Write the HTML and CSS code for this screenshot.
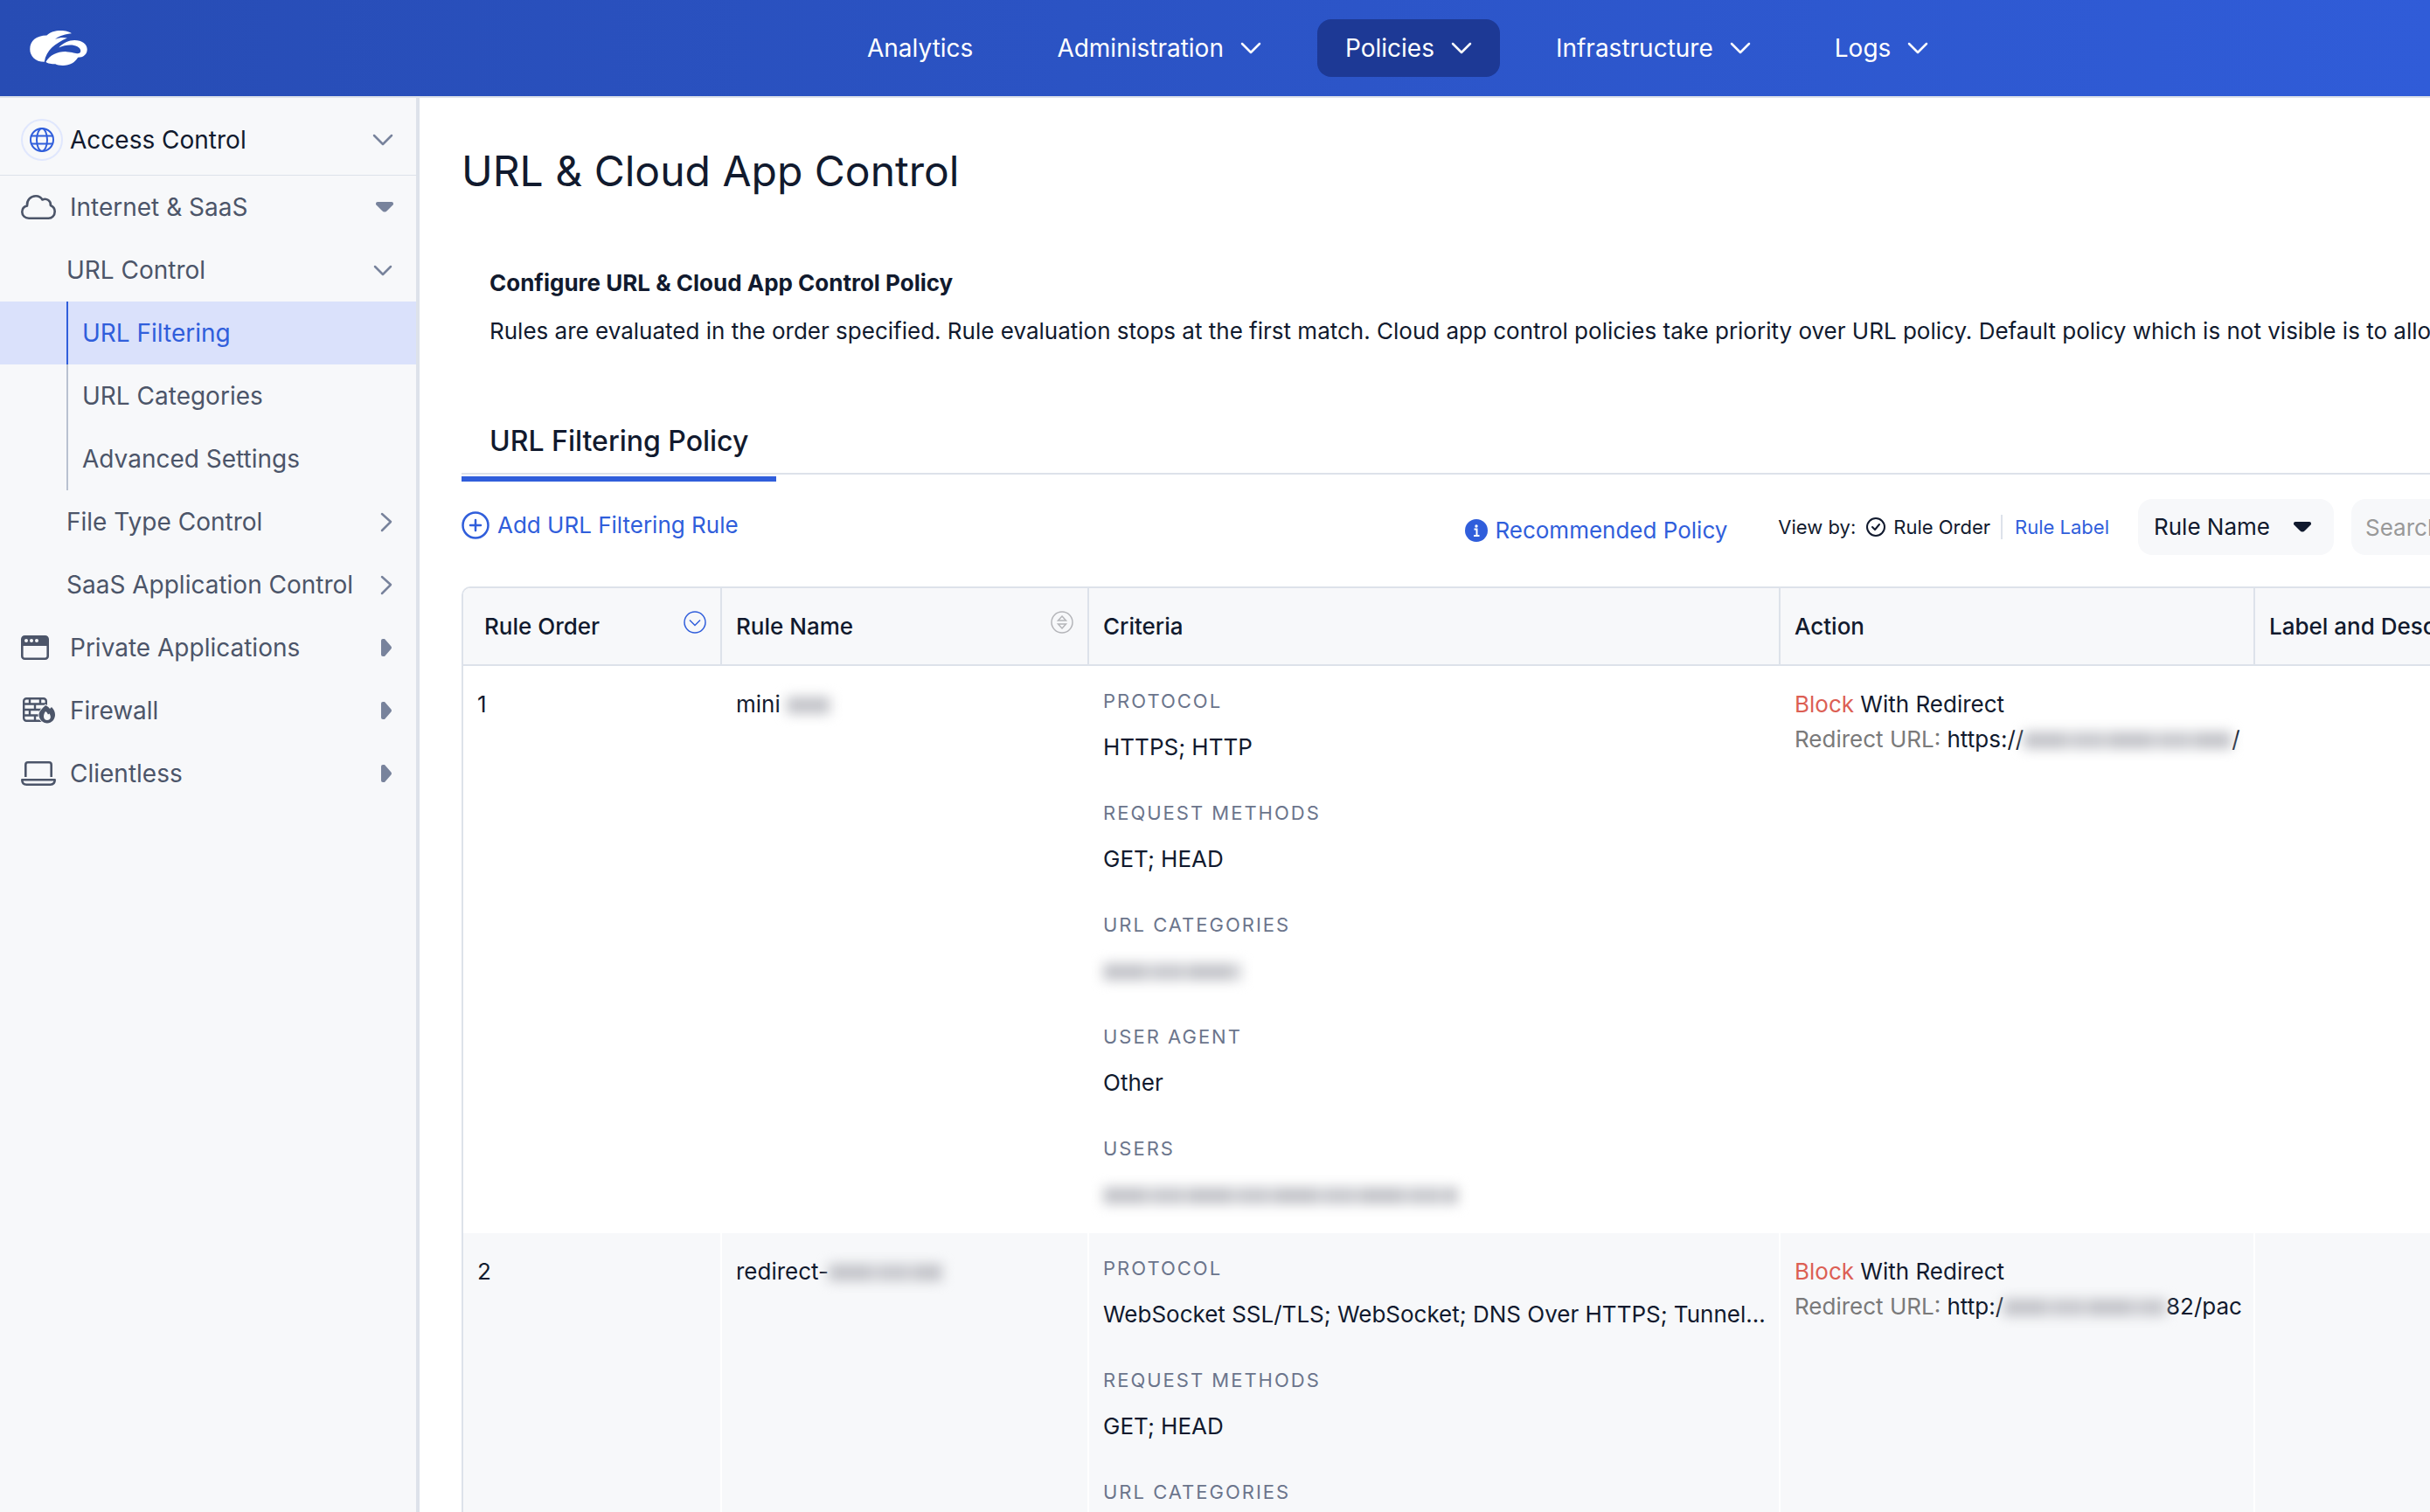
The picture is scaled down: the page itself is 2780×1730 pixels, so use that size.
FILE: index.html
```html
<!DOCTYPE html>
<html lang="en">
<head>
    <meta charset="UTF-8">
    <meta name="viewport" content="width=device-width, initial-scale=1.0">
    <title>URL &amp; Cloud App Control</title>
    <link rel="stylesheet" href="styles.css">
</head>
<body>
    <!-- shared arrow icons -->
    <svg class="sprite" aria-hidden="true">
        <symbol id="chevron-down" viewBox="0 0 24 24"><path d="M2 7l10 10L22 7" fill="none" stroke="currentColor" stroke-width="2.5" stroke-linecap="round" stroke-linejoin="round"/></symbol>
        <symbol id="chevron-down-small" viewBox="0 0 24 24"><path d="M3 8l9 9 9-9" fill="none" stroke="currentColor" stroke-width="2.5" stroke-linecap="round" stroke-linejoin="round"/></symbol>
        <symbol id="chevron-right" viewBox="0 0 24 24"><path d="M11 3l10 9-10 10" fill="none" stroke="currentColor" stroke-width="2.5" stroke-linecap="round" stroke-linejoin="round"/></symbol>
        <symbol id="caret-down" viewBox="0 0 24 24"><path d="M6 6h16q2 0 2 2v1l-7 7q-3 3-6 0L4 9V8q0-2 2-2z" fill="currentColor"/></symbol>
        <symbol id="caret-right" viewBox="0 0 24 24"><path d="M10 4q0-2 2-2h2l7 8q2 2 0 4l-7 8h-2q-2 0-2-2z" fill="currentColor"/></symbol>
    </svg>

    <header>
        <a href="#" class="logo" aria-label="Home">
            <svg width="66" height="40" viewBox="102 98 198 121" fill="#fff">
                <path d="M152 206C120 206 102 186 102 162C102 134 124 115 160 115C172 103 190 98 208 98C226 98 240 102 246 108C226 110 206 115 189 128C204 122 218 121 231 124C190 142 158 166 152 206Z"/>
                <path d="M202 157C215 140 238 131 256 131C282 131 300 144 300 163C300 181 286 191 268 191C258 208 240 219 216 219C204 219 196 217 190 214C178 214 162 212 157 206C172 182 198 170 228 171C250 172 262 178 270 177C282 174 279 160 266 153C248 144 222 148 202 157Z"/>
            </svg>
        </a>
        <nav class="top-nav">
            <a href="#">Analytics</a>
            <button type="button">Administration <svg class="arrow"><use href="#chevron-down"/></svg></button>
            <button type="button" class="active">Policies <svg class="arrow"><use href="#chevron-down"/></svg></button>
            <button type="button">Infrastructure <svg class="arrow"><use href="#chevron-down"/></svg></button>
            <button type="button">Logs <svg class="arrow"><use href="#chevron-down"/></svg></button>
        </nav>
    </header>

    <div class="page">
        <aside class="sidebar">
            <button type="button" class="side-item side-title">
                <span class="side-icon globe">
                    <svg width="28" height="28" viewBox="0 0 28 28" fill="none" stroke="#305edb" stroke-width="2">
                        <circle cx="14" cy="14" r="13"/><ellipse cx="14" cy="14" rx="6" ry="13"/><path d="M2 9.500h24M2 18.500h24"/>
                    </svg>
                </span>
                <span class="side-label">Access Control</span>
                <svg class="arrow"><use href="#chevron-down"/></svg>
            </button>
            <button type="button" class="side-item">
                <span class="side-icon">
                    <svg width="40" height="28" viewBox="0 0 40 28" fill="none" stroke="#4c5569" stroke-width="2.600" stroke-linejoin="round">
                        <path d="M9 26.700C4.500 26.700 1.300 23.700 1.300 19.500C1.300 16 3.500 13.300 7 12.500C6.500 6 11 1.300 17 1.300C20.500 1.300 23 3 24.500 5.500C29.500 3.300 34.500 7 33.800 12C37 13.300 38.700 16 38.700 19C38.700 23.500 35.500 26.700 31.500 26.700Z"/>
                    </svg>
                </span>
                <span class="side-label">Internet &amp; SaaS</span>
                <svg class="arrow"><use href="#caret-down"/></svg>
            </button>
            <button type="button" class="side-item sub">
                <span class="side-label">URL Control</span>
                <svg class="arrow"><use href="#chevron-down-small"/></svg>
            </button>
            <a href="#" class="side-item leaf current"><span>URL Filtering</span></a>
            <a href="#" class="side-item leaf"><span>URL Categories</span></a>
            <a href="#" class="side-item leaf"><span>Advanced Settings</span></a>
            <button type="button" class="side-item sub">
                <span class="side-label">File Type Control</span>
                <svg class="arrow"><use href="#chevron-right"/></svg>
            </button>
            <button type="button" class="side-item sub">
                <span class="side-label">SaaS Application Control</span>
                <svg class="arrow"><use href="#chevron-right"/></svg>
            </button>
            <button type="button" class="side-item">
                <span class="side-icon">
                    <svg width="32" height="28" viewBox="0 0 32 28">
                        <rect x="1.300" y="1.300" width="29.400" height="25.400" rx="3" fill="none" stroke="#4c5569" stroke-width="2.600"/>
                        <path d="M1 4q0-3 3-3h24q3 0 3 3v8H1z" fill="#4c5569"/>
                        <g fill="#f7f8fa"><circle cx="6" cy="6" r="2"/><circle cx="12" cy="6" r="2"/><circle cx="18" cy="6" r="2"/></g>
                    </svg>
                </span>
                <span class="side-label">Private Applications</span>
                <svg class="arrow"><use href="#caret-right"/></svg>
            </button>
            <button type="button" class="side-item">
                <span class="side-icon">
                    <svg width="40" height="32" viewBox="0 0 40 32">
                        <g fill="none" stroke="#4c5569" stroke-width="2.400">
                            <rect x="3.200" y="2.200" width="25.600" height="25.600" rx="3"/>
                            <path d="M3 8.500h26M3 15h26M3 21.500h26M10 2v6M22 2v6M16 8v7M10 15v6M22 15v6M16 21v7"/>
                        </g>
                        <path d="M28 10C31 11 32 13 33 14L35 12C38 15 39 18 39 21C39 26 35 30.500 30 30.500S20.500 26 20.500 21C20.500 17 24 14 28 10Z" fill="#4c5569" stroke="#f7f8fa" stroke-width="2" paint-order="stroke"/>
                        <path d="M28 17C30 18 30 19 31 20.500L32.500 19.500C35 23 34 27 30 27S24.500 22 28 17Z" fill="#f7f8fa"/>
                    </svg>
                </span>
                <span class="side-label">Firewall</span>
                <svg class="arrow"><use href="#caret-right"/></svg>
            </button>
            <button type="button" class="side-item">
                <span class="side-icon">
                    <svg width="40" height="28" viewBox="0 0 40 28" fill="none" stroke="#4c5569" stroke-width="2.600" stroke-linejoin="round">
                        <path d="M5.300 18V4q0-2.700 2.700-2.700h24q2.700 0 2.700 2.700v14"/>
                        <path d="M1.300 21.300h37.400q0 5.400-5 5.400H6.300q-5 0-5-5.400z"/>
                    </svg>
                </span>
                <span class="side-label">Clientless</span>
                <svg class="arrow"><use href="#caret-right"/></svg>
            </button>
        </aside>

        <main>
            <div class="content">
                <h1>URL &amp; Cloud App Control</h1>

                <section class="intro">
                    <h2>Configure URL &amp; Cloud App Control Policy</h2>
                    <p>Rules are evaluated in the order specified. Rule evaluation stops at the first match. Cloud app control policies take priority over URL policy. Default policy which is not visible is to allow</p>
                </section>

                <div class="tabs">
                    <button type="button" class="tab">URL Filtering Policy</button>
                </div>

                <div class="toolbar">
                    <a href="#" class="add-rule">
                        <svg width="32" height="32" viewBox="0 0 32 32" fill="none" stroke="currentColor" stroke-width="2.500" stroke-linecap="round">
                            <circle cx="16" cy="16" r="14.500"/><path d="M10 16h12M16 10v12"/>
                        </svg>
                        Add URL Filtering Rule
                    </a>
                    <div class="tools">
                        <a href="#" class="recommended">
                            <svg width="26" height="26" viewBox="0 0 26 26">
                                <circle cx="13" cy="13" r="13" fill="currentColor"/>
                                <path d="M10.500 11.500h3v7M10 19h6.500" fill="none" stroke="#fff" stroke-width="2"/>
                                <circle cx="13" cy="8" r="1.700" fill="#fff"/>
                            </svg>
                            Recommended Policy
                        </a>
                        <div class="view-by">
                            <span>View by:</span>
                            <button type="button" class="view-option selected">
                                <svg width="22" height="22" viewBox="0 0 22 22" fill="none" stroke="currentColor" stroke-width="2" stroke-linecap="round" stroke-linejoin="round">
                                    <circle cx="11" cy="11" r="10"/><path d="M7 11l3 3 5-6"/>
                                </svg>
                                Rule Order
                            </button>
                            <button type="button" class="view-option">Rule Label</button>
                        </div>
                        <div class="select-box">
                            <select aria-label="Search field">
                                <option>Rule Name</option>
                            </select>
                            <svg class="arrow"><use href="#caret-down"/></svg>
                        </div>
                        <input type="text" class="search" placeholder="Search..." aria-label="Search rules">
                    </div>
                </div>

                <table class="rules">
                    <colgroup>
                        <col class="col-order">
                        <col class="col-name">
                        <col class="col-criteria">
                        <col class="col-action">
                        <col>
                    </colgroup>
                    <thead>
                        <tr>
                            <th class="first">
                                <div class="th-inner">Rule Order
                                    <svg class="sort" viewBox="0 0 26 26" fill="none" stroke="#305edb" stroke-width="1.500"><circle cx="13" cy="13" r="12"/><path d="M7 10.500l6 6 6-6"/></svg>
                                </div>
                            </th>
                            <th>
                                <div class="th-inner">Rule Name
                                    <svg class="sort" viewBox="0 0 26 26" fill="none" stroke="#b4b5b9" stroke-width="1.500"><circle cx="13" cy="13" r="12"/><path d="M13 6l4.500 5h-9zM13 20l4.500-5h-9z"/></svg>
                                </div>
                            </th>
                            <th>Criteria</th>
                            <th>Action</th>
                            <th>Label and Description</th>
                        </tr>
                    </thead>
                    <tbody>
                        <tr>
                            <td>1</td>
                            <td>mini <span class="redacted short"></span></td>
                            <td>
                                <dl>
                                    <div><dt>Protocol</dt><dd>HTTPS; HTTP</dd></div>
                                    <div><dt>Request Methods</dt><dd>GET; HEAD</dd></div>
                                    <div><dt>URL Categories</dt><dd><span class="redacted medium"></span></dd></div>
                                    <div><dt>User Agent</dt><dd>Other</dd></div>
                                    <div><dt>Users</dt><dd><span class="redacted long"></span></dd></div>
                                </dl>
                            </td>
                            <td>
                                <div><span class="block">Block</span> With Redirect</div>
                                <div><span class="key">Redirect URL:</span> https://<span class="redacted host"></span>/</div>
                            </td>
                            <td></td>
                        </tr>
                        <tr>
                            <td>2</td>
                            <td>redirect-<span class="redacted name"></span></td>
                            <td>
                                <dl>
                                    <div><dt>Protocol</dt><dd>WebSocket SSL/TLS; WebSocket; DNS Over HTTPS; Tunnel...</dd></div>
                                    <div><dt>Request Methods</dt><dd>GET; HEAD</dd></div>
                                    <div><dt>URL Categories</dt><dd></dd></div>
                                </dl>
                            </td>
                            <td>
                                <div><span class="block">Block</span> With Redirect</div>
                                <div><span class="key">Redirect URL:</span> http:/<span class="redacted address"></span>82/pac</div>
                            </td>
                            <td></td>
                        </tr>
                    </tbody>
                </table>
            </div>
        </main>
    </div>
</body>
</html>
```

FILE: styles.css
```css
* {
    box-sizing: border-box;
}

body {
    font-family: 'Inter', 'Liberation Sans', sans-serif;
    font-size: 26px;
    line-height: 40px;
    margin: 0;
    color: #111a2e;
    background-color: #fff;
    display: flex;
    flex-direction: column;
    height: 100vh;
    overflow: hidden;
}

button, select, input {
    font: inherit;
    color: inherit;
    background: none;
    border: none;
    padding: 0;
    margin: 0;
}

button {
    cursor: pointer;
    text-align: left;
}

a {
    text-decoration: none;
    color: #305edb;
}

svg {
    flex-shrink: 0;
}

.sprite {
    display: none;
}

.arrow {
    width: 24px;
    height: 24px;
}

/* Top bar */
header {
    display: flex;
    align-items: center;
    flex-shrink: 0;
    height: 112px;
    padding-left: 34px;
    background: linear-gradient(90deg, #274cb4, #305cd8);
    border-bottom: 2px solid #dde2ea;
}

.logo {
    display: flex;
}

.top-nav {
    display: flex;
    gap: 32px;
    margin-left: 860px;
}

.top-nav a,
.top-nav button {
    display: flex;
    align-items: center;
    gap: 19px;
    height: 66px;
    padding: 0 32px;
    border-radius: 16px;
    font-size: 28px;
    color: #fff;
    white-space: nowrap;
}

.top-nav .active {
    background-color: #1d3995;
}

.page {
    display: flex;
    flex: 1;
    min-height: 0;
}

/* Sidebar */
.sidebar {
    width: 480px;
    flex-shrink: 0;
    background-color: #f7f8fa;
    border-right: 4px solid #dde2ea;
}

.side-item {
    display: flex;
    align-items: center;
    width: 100%;
    height: 72px;
    padding: 0 26px 0 24px;
    font-size: 28px;
    color: #4c5569;
    white-space: nowrap;
}

.side-item .arrow {
    color: #78839c;
}

.side-title {
    height: 89px;
    padding-top: 8px;
    color: #111a2e;
    border-bottom: 1px solid #dde2ea;
}

.side-icon {
    display: flex;
    align-items: center;
    width: 48px;
    margin-right: 8px;
}

.globe {
    height: 48px;
    justify-content: center;
    border: 2px solid #e0e7fd;
    border-radius: 50%;
}

.side-label {
    flex: 1;
}

.sub {
    padding-left: 76px;
}

.leaf {
    padding-left: 76px;
}

.leaf span {
    display: flex;
    align-items: center;
    height: 100%;
    padding-left: 16px;
    border-left: 2px solid #b9c1d0;
}

.leaf.current {
    color: #305edb;
    background-color: #dae1fb;
}

.leaf.current span {
    border-color: #305edb;
}

/* Main content, wider than the window and clipped on the right */
main {
    flex: 1;
    min-width: 0;
    overflow: hidden;
}

.content {
    min-width: 2720px;
    padding: 52px 48px 0;
}

h1 {
    margin: 0;
    font-size: 48px;
    line-height: 64px;
    font-weight: 400;
}

.intro {
    padding: 76px 32px 0;
    white-space: nowrap;
}

.intro h2 {
    margin: 0 0 15px;
    font-size: 26px;
    font-weight: 700;
}

.intro p {
    margin: 0;
}

.tabs {
    margin-top: 76px;
    height: 68px;
    border-bottom: 2px solid #dde2ea;
}

.tab {
    height: 76px;
    padding: 0 32px 10px;
    font-size: 32px;
    font-weight: 500;
    border-bottom: 6px solid #305edb;
}

.toolbar {
    display: flex;
    justify-content: space-between;
    padding-top: 28px;
    height: 128px;
    white-space: nowrap;
}

.tools {
    display: flex;
    align-items: center;
    height: 64px;
}

.add-rule {
    display: flex;
    align-items: center;
    gap: 9px;
    height: 60px;
}

.recommended {
    display: flex;
    align-items: center;
    gap: 8px;
    padding-top: 8px;
    margin-right: 58px;
}

.view-by {
    display: flex;
    align-items: center;
    font-size: 22px;
    margin-right: 33px;
}

.view-option {
    display: flex;
    align-items: center;
    gap: 9px;
    height: 28px;
    padding: 0 0 0 14px;
    color: #305edb;
}

.view-option.selected {
    padding: 0 12px;
    color: #111a2e;
    border-right: 2px solid #dde2ea;
}

.select-box {
    position: relative;
    width: 224px;
    margin-right: 20px;
}

.select-box select {
    display: block;
    width: 100%;
    height: 64px;
    padding: 0 18px;
    border-radius: 16px;
    background-color: #f7f8fa;
    appearance: none;
}

.select-box .arrow {
    position: absolute;
    right: 26px;
    top: 20px;
    pointer-events: none;
}

.search {
    width: 462px;
    height: 64px;
    padding: 0 16px;
    border-radius: 16px;
    background-color: #f7f8fa;
}

.search::placeholder {
    color: #999;
}

/* Rules table */
.rules {
    width: 100%;
    table-layout: fixed;
    border-collapse: separate;
    border-spacing: 0;
    border: 2px solid #dde2ea;
    border-radius: 10px;
    overflow: hidden;
}

.col-order {
    width: 296px;
}

.col-name {
    width: 420px;
}

.col-criteria {
    width: 791px;
}

.col-action {
    width: 543px;
}

.rules th {
    height: 89px;
    padding: 0 16px;
    text-align: left;
    font-weight: 500;
    background-color: #f7f8fa;
    border-right: 2px solid #dde2ea;
    border-bottom: 2px solid #dde2ea;
}

.rules th.first {
    padding-left: 24px;
}

.th-inner {
    display: flex;
    justify-content: space-between;
}

.sort {
    width: 26px;
    height: 26px;
    margin-top: 2px;
}

.rules td {
    padding: 24px 16px;
    vertical-align: top;
    white-space: nowrap;
    border-right: 2px solid #fff;
}

.rules tbody tr:nth-child(even) {
    background-color: #f7f8fa;
}

dl {
    display: flex;
    flex-direction: column;
    gap: 39px;
    margin: 0;
}

dt {
    margin-bottom: 17px;
    font-size: 22px;
    line-height: 32px;
    letter-spacing: 2px;
    text-transform: uppercase;
    color: #6b758c;
}

dd {
    margin: 0;
    height: 40px;
}

.block {
    color: #dc5f54;
}

.key {
    color: #7a7a7a;
}

/* Hidden values */
.redacted {
    display: inline-block;
    height: 20px;
    vertical-align: -2px;
    background: repeating-linear-gradient(90deg, #c4c5ca 0 48px, #d4d5d9 48px 58px, #c9cacf 58px 92px, #d9dadd 92px 98px);
    filter: blur(7px);
}

.short {
    width: 50px;
}

.medium {
    width: 158px;
}

.long {
    width: 406px;
}

.name {
    width: 130px;
}

.host {
    width: 238px;
}

.address {
    width: 186px;
}
```
